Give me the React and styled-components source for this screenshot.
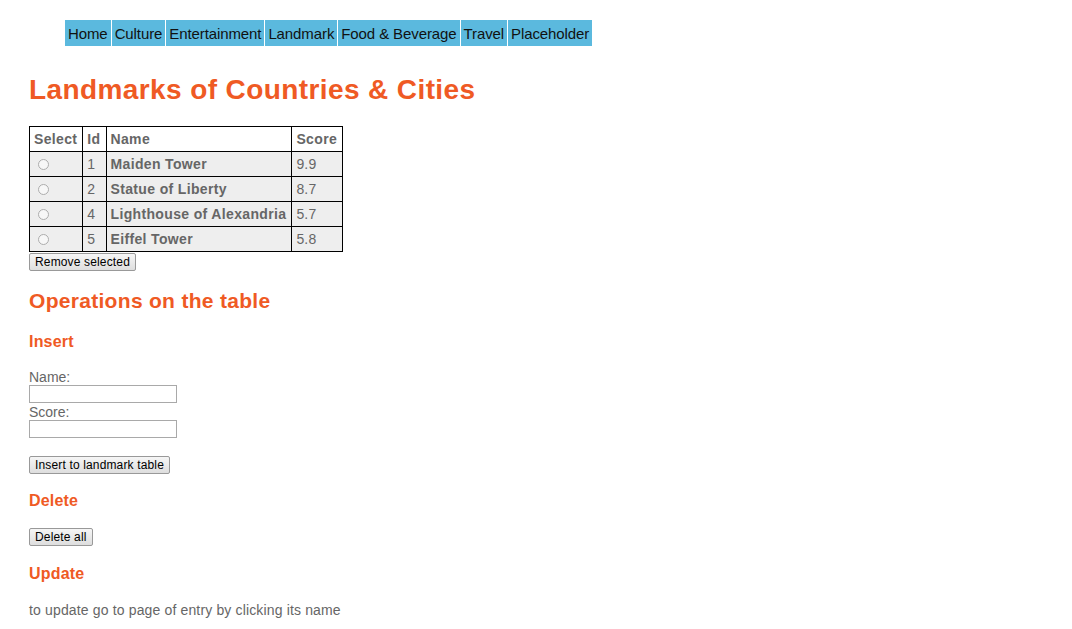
import styled, { createGlobalStyle } from "styled-components";

const GlobalStyle = createGlobalStyle`
  body {
    margin: 8px;
    font-family: "Liberation Sans", Arial, sans-serif;
    font-size: 14px;
    color: #666;
    background: #fff;
  }
`;

const navItems = [
  "Home",
  "Culture",
  "Entertainment",
  "Landmark",
  "Food & Beverage",
  "Travel",
  "Placeholder",
];

const landmarks = [
  { id: 1, name: "Maiden Tower", score: "9.9" },
  { id: 2, name: "Statue of Liberty", score: "8.7" },
  { id: 4, name: "Lighthouse of Alexandria", score: "5.7" },
  { id: 5, name: "Eiffel Tower", score: "5.8" },
];

export default function App() {
  return (
    <Page>
      <GlobalStyle />
      <NavBar>
        {navItems.map((item) => (
          <NavItem key={item}>{item}</NavItem>
        ))}
      </NavBar>

      <Title>Landmarks of Countries &amp; Cities</Title>

      <LandmarkTable>
        <thead>
          <tr>
            <th>Select</th>
            <th>Id</th>
            <th>Name</th>
            <th>Score</th>
          </tr>
        </thead>
        <tbody>
          {landmarks.map((item) => (
            <tr key={item.id}>
              <td>
                <Radio type="radio" name="select" />
              </td>
              <td>{item.id}</td>
              <td className="name">{item.name}</td>
              <td>{item.score}</td>
            </tr>
          ))}
        </tbody>
      </LandmarkTable>
      <SmallButton>Remove selected</SmallButton>

      <SectionTitle>Operations on the table</SectionTitle>

      <SubTitle>Insert</SubTitle>
      <InsertForm>
        <label>Name:</label>
        <TextInput type="text" />
        <label>Score:</label>
        <TextInput type="text" />
      </InsertForm>
      <SmallButton $top={17}>Insert to landmark table</SmallButton>

      <SubTitle>Delete</SubTitle>
      <SmallButton $top={0}>Delete all</SmallButton>

      <SubTitle $top={18}>Update</SubTitle>
      <Note>to update go to page of entry by clicking its name</Note>
    </Page>
  );
}

const Page = styled.div`
  padding: 12px 21px 0;
`;

const NavBar = styled.ul`
  display: flex;
  gap: 1px;
  list-style: none;
  margin: 0 0 0 36px;
  padding: 0;
`;

const NavItem = styled.li`
  background: #5bb9de;
  color: #111;
  font-size: 15px;
  letter-spacing: -0.1px;
  height: 26px;
  line-height: 27px;
  padding: 0 3px;
  cursor: pointer;
`;

const Title = styled.h1`
  color: #ef5a24;
  font-size: 28px;
  letter-spacing: 0.4px;
  line-height: 32px;
  font-weight: bold;
  margin: 28px 0 20px;
`;

const LandmarkTable = styled.table`
  border-collapse: collapse;
  border: 1px solid #000;
  font-size: 14px;
  color: #666;

  th,
  td {
    border: 1px solid #000;
    height: 24px;
    padding: 0 5px 0 4px;
    text-align: left;
    letter-spacing: 0.15px;
  }

  th {
    font-weight: bold;
    letter-spacing: 0.35px;
    background: #fff;
  }

  tbody td {
    background: #eee;
  }

  .name {
    font-weight: bold;
    letter-spacing: 0.35px;
  }
`;

const Radio = styled.input`
  margin: 0 0 2px 4px;
  width: 11px;
  height: 11px;
  vertical-align: middle;
  accent-color: #ccc;
  opacity: 0.55;
`;

const SmallButton = styled.button`
  display: block;
  margin-top: ${(p) => (p.$top != null ? p.$top : 1)}px;
  font-family: "Liberation Sans", Arial, sans-serif;
  font-size: 12px;
  letter-spacing: 0.15px;
  color: #000;
  height: 18px;
  padding: 0 5px;
  background: linear-gradient(#f6f6f6, #dedede);
  border: 1px solid #999;
  border-radius: 2px;
`;

const SectionTitle = styled.h2`
  color: #ef5a24;
  font-size: 21px;
  letter-spacing: 0.3px;
  line-height: 24px;
  font-weight: bold;
  margin: 18px 0 19px;
`;

const SubTitle = styled.h3`
  color: #ef5a24;
  font-size: 16px;
  letter-spacing: 0.2px;
  line-height: 19px;
  font-weight: bold;
  margin: ${(p) => (p.$top != null ? p.$top : 17)}px 0 18px;
`;

const InsertForm = styled.form`
  display: flex;
  flex-direction: column;
  align-items: flex-start;
  margin: 0;

  label {
    font-size: 14px;
    line-height: 16px;
    color: #666;
  }
`;

const TextInput = styled.input`
  width: 148px;
  height: 18px;
  box-sizing: border-box;
  border: 1px solid #a9a9a9;
  padding: 0 2px;
  margin: 0 0 1px;
`;

const Note = styled.p`
  margin: 19px 0 0;
  font-size: 14px;
  letter-spacing: 0.15px;
  color: #666;
`;
